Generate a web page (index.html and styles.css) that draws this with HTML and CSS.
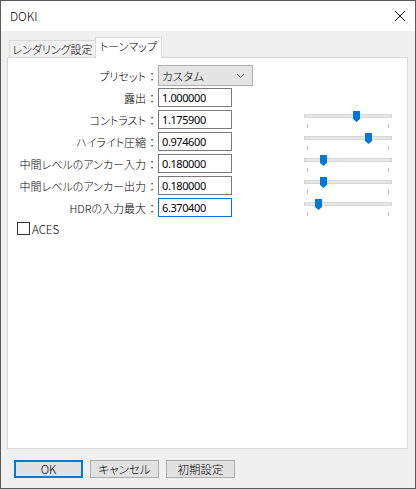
FILE: index.html
```html
<!DOCTYPE html>
<html lang="ja">
<head>
<meta charset="utf-8">
<link rel="stylesheet" href="styles.css">
</head>
<body>
<div class="window">
  <div class="titlebar">
    <span class="title">DOKI</span>
    <svg class="close" width="12" height="12" viewBox="0 0 12 12"><path d="M1 1L11 11M11 1L1 11" stroke="#000" stroke-width="1" fill="none"/></svg>
  </div>
  <div class="client">
    <div class="tabs">
      <div class="tab">レンダリング設定</div>
      <div class="tab active">トーンマップ</div>
    </div>
    <div class="panel">
      <div class="form">
        <div class="label row-first"><span class="lt">プリセット</span><span class="colon">：</span></div>
        <div class="ctrl row-first">
          <div class="combo"><span>カスタム</span>
            <svg class="chev" width="9" height="6" viewBox="0 0 9 6"><path d="M1 1L4.5 4.5L8 1" stroke="#606060" stroke-width="1" fill="none"/></svg>
          </div>
        </div>
        <div class="slot row-first"></div>

        <div class="label"><span class="lt">露出</span><span class="colon">：</span></div>
        <div class="ctrl"><div class="input">1.000000</div></div>
        <div class="slot"></div>

        <div class="label"><span class="lt">コントラスト</span><span class="colon">：</span></div>
        <div class="ctrl"><div class="input">1.175900</div></div>
        <div class="slot"><div class="slider"><div class="track"><span class="thumb" style="left:48px"></span></div><div class="ticks"><i></i><i></i></div></div></div>

        <div class="label"><span class="lt">ハイライト圧縮</span><span class="colon">：</span></div>
        <div class="ctrl"><div class="input">0.974600</div></div>
        <div class="slot"><div class="slider"><div class="track"><span class="thumb" style="left:60px"></span></div><div class="ticks"><i></i><i></i></div></div></div>

        <div class="label"><span class="lt">中間レベルのアンカー入力</span><span class="colon">：</span></div>
        <div class="ctrl"><div class="input">0.180000</div></div>
        <div class="slot"><div class="slider"><div class="track"><span class="thumb" style="left:15px"></span></div><div class="ticks"><i></i><i></i></div></div></div>

        <div class="label"><span class="lt">中間レベルのアンカー出力</span><span class="colon">：</span></div>
        <div class="ctrl"><div class="input">0.180000</div></div>
        <div class="slot"><div class="slider"><div class="track"><span class="thumb" style="left:15px"></span></div><div class="ticks"><i></i><i></i></div></div></div>

        <div class="label"><span class="lt">HDRの入力最大</span><span class="colon">：</span></div>
        <div class="ctrl"><div class="input focus">6.370400</div></div>
        <div class="slot"><div class="slider"><div class="track"><span class="thumb" style="left:10px"></span></div><div class="ticks"><i></i><i></i></div></div></div>
      </div>
      <div class="check"><span class="box"></span><span class="cl">ACES</span></div>
    </div>
    <div class="buttons">
      <div class="btn default">OK</div>
      <div class="btn">キャンセル</div>
      <div class="btn">初期設定</div>
    </div>
  </div>
</div>
</body>
</html>
```
FILE: styles.css
```css
* { box-sizing: border-box; }
html, body { margin: 0; padding: 0; }
body {
  width: 416px;
  height: 489px;
  font-family: "Noto Sans CJK JP", "Noto Sans", sans-serif;
  font-size: 11px;
  font-weight: 300;
  color: #000;
  overflow: hidden;
}
.window {
  width: 416px;
  height: 489px;
  border: 1px solid #5a5a5a;
  background: #f0f0f0;
  display: flex;
  flex-direction: column;
}
.titlebar {
  height: 30px;
  background: #fff;
  display: flex;
  align-items: center;
  justify-content: space-between;
  padding: 0 9px 0 9px;
}
.title {
  font-size: 12px;
  line-height: 14px;
}
.close { display: block; }
.client {
  flex: 1;
  padding: 6px 0 0 6px;
}
.tabs {
  display: flex;
  align-items: flex-end;
  padding-left: 2px;
  height: 20px;
}
.tab {
  height: 17px;
  width: 86px;
  border: 1px solid #d9d9d9;
  border-bottom: none;
  border-right: none;
  background: #f0f0f0;
  font-feature-settings: "palt";
  font-size: 11px;
  line-height: 16px;
  text-align: center;
  white-space: nowrap;
}
.tab.active {
  height: 21px;
  width: 67px;
  background: #fff;
  border-right: 1px solid #d9d9d9;
  margin-bottom: -1px;
  position: relative;
  z-index: 1;
  line-height: 17px;
  font-size: 11px;
}
.panel {
  width: 401px;
  height: 392px;
  border: 1px solid #d9d9d9;
  background: #fff;
  padding-top: 7px;
}
.form {
  display: grid;
  grid-template-columns: 150px 146px 88px;
  grid-template-rows: 23px;
  grid-auto-rows: 22px;
}
.label {
  display: flex;
  justify-content: flex-end;
  align-items: center;
  height: 19px;
  white-space: nowrap;
  font-size: 11px;
}
.label.row-first { height: 21px; }
.lt { font-feature-settings: "palt"; }
.colon { width: 12px; text-align: center; }
.input {
  width: 74px;
  height: 19px;
  border: 1px solid #7a7a7a;
  padding-left: 3px;
  line-height: 17px;
  font-family: "Noto Sans", sans-serif;
  font-weight: 400;
  font-size: 11px;
  letter-spacing: -0.4px;
  background: #fff;
}
.input.focus { border-color: #0078d7; }
.combo {
  width: 95px;
  height: 21px;
  border: 1px solid #adadad;
  background: #e5e5e5;
  display: flex;
  align-items: center;
  justify-content: space-between;
  padding: 0 7px 0 3px;
  font-feature-settings: "palt";
  font-size: 11.5px;
}
.chev { display: block; }
.slider {
  position: relative;
  padding-top: 4px;
}
.track {
  position: relative;
  height: 4px;
  background: #e7e7e7;
  border: 1px solid #d6d6d6;
}
.thumb {
  position: absolute;
  top: -4px;
  width: 7px;
  height: 11px;
  background: #0078d7;
  clip-path: polygon(0 0, 100% 0, 100% 72%, 50% 100%, 0 72%);
}
.ticks {
  display: flex;
  justify-content: space-between;
  padding: 0 3px;
  margin-top: 6px;
  height: 4px;
}
.ticks i {
  display: block;
  width: 1px;
  height: 4px;
  background: #c4c4c4;
}
.check {
  display: flex;
  align-items: center;
  padding-left: 9px;
  margin-top: 2px;
  height: 13px;
}
.box {
  width: 13px;
  height: 13px;
  border: 1px solid #333;
  background: #fff;
}
.cl {
  margin-left: 2px;
  font-size: 11.5px;
}
.buttons {
  display: flex;
  gap: 7px;
  padding: 11px 0 0 7px;
}
.btn {
  width: 69px;
  height: 18px;
  border: 1px solid #adadad;
  background: #e1e1e1;
  display: flex;
  align-items: center;
  justify-content: center;
  font-feature-settings: "palt";
  font-size: 11.5px;
  line-height: 14px;
}
.btn.default {
  border: 2px solid #0078d7;
}
```
